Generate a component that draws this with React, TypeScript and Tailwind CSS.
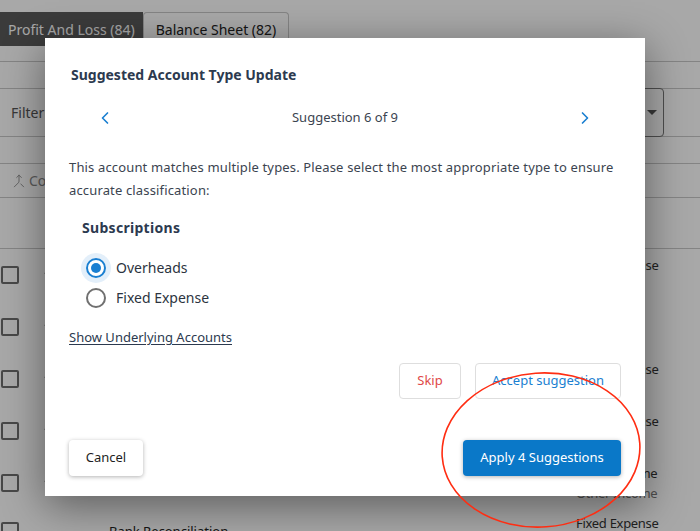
import React from "react";
import { ChevronLeft, ChevronRight, ChevronDown, Merge } from "lucide-react";

const rows = [
  { label: "Fixed Expense", sub: "" },
  { label: "Revenue", sub: "" },
  { label: "Fixed Expense", sub: "" },
  { label: "Fixed Expense", sub: "" },
  { label: "Other Income", sub: "Other Income" },
];

const App: React.FC = () => {
  return (
    <div className="relative w-[700px] h-[531px] overflow-hidden bg-white" style={{ fontFamily: "'Noto Sans', 'Open Sans', sans-serif" }}>
      {/* page behind the modal */}
      <div className="pt-[12px]">
        <div className="flex h-[34px] text-[14px]">
          <div className="w-[143px] bg-[#5a5a5a] text-white flex items-center pl-[8px]">Profit And Loss (84)</div>
          <div className="w-[146px] border border-[#c8c8c8] border-b-0 rounded-t-[4px] flex items-center justify-center text-[#222]">Balance Sheet (82)</div>
        </div>
        <div className="h-[16px] border-b border-[#c8c8c8]" />
        <div className="h-[26px]" />
        <div className="h-[49px] border-y border-[#c8c8c8] flex items-center justify-between">
          <span className="pl-[11px] text-[14px] text-[#555]">Filter</span>
          <div className="flex items-center gap-[36px] -mr-[40px]">
            <div className="w-[120px] h-[49px] border border-[#777] rounded-[4px] flex items-center justify-end pr-[6px]">
              <span className="w-0 h-0 border-x-[5px] border-x-transparent border-t-[5px] border-t-[#555]" />
            </div>
            <div className="w-[40px] h-[49px] border border-[#777] rounded-[4px]" />
          </div>
        </div>
        <div className="h-[26px]" />
        <div className="h-[35px] border-y border-[#c8c8c8] flex items-center pl-[12px] text-[14px] text-[#888] gap-[3px]">
          <Merge size={14} strokeWidth={1.5} />Copy
        </div>
        <div className="h-[51px] border-b border-[#c8c8c8]" />
        {rows.map((r, i) => (
          <div key={i} className="h-[52px] flex items-center pr-[6px]">
            <div className="w-[18px] h-[18px] border-2 border-[#6e6e6e] rounded-[2px] ml-[1px]" />
            <ChevronDown size={14} strokeWidth={3} className="ml-[23px] text-[#111]" />
            <div className="ml-auto w-[118px] self-start pt-[7px] text-[13px] leading-[18px] text-[#333] tracking-[-0.3px]">
              <div>{r.label}</div>
              {r.sub && <div className="mt-[2px] text-[#777]">{r.sub}</div>}
            </div>
          </div>
        ))}
        <div className="h-[52px] flex items-start pr-[6px] pt-[9px]">
          <div className="w-[18px] h-[18px] border-2 border-[#6e6e6e] rounded-[2px] ml-[1px] mt-[4px]" />
          <span className="ml-[90px] mt-[4px] text-[13px] text-[#222]">Bank Reconciliation</span>
          <span className="ml-auto -mt-[4px] w-[118px] text-[13px] text-[#333] tracking-[-0.3px]">Fixed Expense</span>
        </div>
      </div>

      {/* overlay */}
      <div className="absolute inset-0 bg-black/[0.34]" />

      {/* modal */}
      <div className="absolute left-[45px] top-[38px] w-[600px] h-[458px] bg-white shadow-[0_10px_40px_rgba(0,0,0,0.45)] px-[24px] pt-[28px] flex flex-col">
        <h2 className="pl-[2px] text-[14px] font-bold text-[#2c3a4f] leading-[18px]">Suggested Account Type Update</h2>

        <div className="mt-[22px] flex items-center justify-between px-[26px] h-[24px]">
          <ChevronLeft size={20} strokeWidth={2} className="text-[#1a7fd1]" />
          <span className="text-[13px] text-[#3b4450]">Suggestion 6 of 9</span>
          <ChevronRight size={20} strokeWidth={2} className="text-[#1a7fd1]" />
        </div>

        <p className="mt-[26px] text-[13px] leading-[23px] text-[#3b4450] tracking-[0.15px]">
          This account matches multiple types. Please select the most appropriate type to ensure accurate classification:
        </p>

        <div className="mt-[15px] pl-[13px]">
          <div className="text-[14px] font-bold text-[#2c3a4f] tracking-[0.3px]">Subscriptions</div>
          <div className="mt-[19px] pl-[4px] flex flex-col gap-[9px]">
            <label className="flex items-center gap-[10px] text-[14px] text-[#2c3440]">
              <span className="w-[20px] h-[20px] rounded-full border-2 border-[#1a7fd1] flex items-center justify-center ring-[5px] ring-[#e3effa]">
                <span className="w-[10px] h-[10px] rounded-full bg-[#1a7fd1]" />
              </span>
              Overheads
            </label>
            <label className="flex items-center gap-[10px] text-[14px] text-[#2c3440]">
              <span className="w-[20px] h-[20px] rounded-full border-2 border-[#707070]" />
              Fixed Expense
            </label>
          </div>
        </div>

        <a className="mt-[20px] self-start text-[13px] leading-[19px] text-[#2c3a4f] underline underline-offset-2">Show Underlying Accounts</a>

        <div className="mt-[16px] flex justify-end gap-[14px]">
          <button className="w-[62px] h-[36px] border border-[#dedede] rounded-[4px] text-[13px] text-[#e04848]">Skip</button>
          <button className="w-[146px] h-[36px] border border-[#dedede] rounded-[4px] text-[13px] text-[#1a7fd1]">Accept suggestion</button>
        </div>

        <div className="mt-[41px] flex justify-between">
          <button className="w-[74px] h-[36px] rounded-[4px] bg-white shadow-[0_1px_4px_rgba(0,0,0,0.3)] text-[13px] text-[#1e1e1e]">Cancel</button>
          <button className="w-[158px] h-[36px] rounded-[4px] bg-[#0a78c8] shadow-[0_1px_4px_rgba(0,0,0,0.3)] text-[13px] text-white">Apply 4 Suggestions</button>
        </div>
      </div>

      {/* red annotation ellipse */}
      <svg className="absolute left-0 top-0 pointer-events-none" width="700" height="531">
        <ellipse cx="541" cy="450" rx="99" ry="77" fill="none" stroke="#ff2d12" strokeWidth="1.6" transform="rotate(-4 541 450)" />
      </svg>
    </div>
  );
};

export default App;
